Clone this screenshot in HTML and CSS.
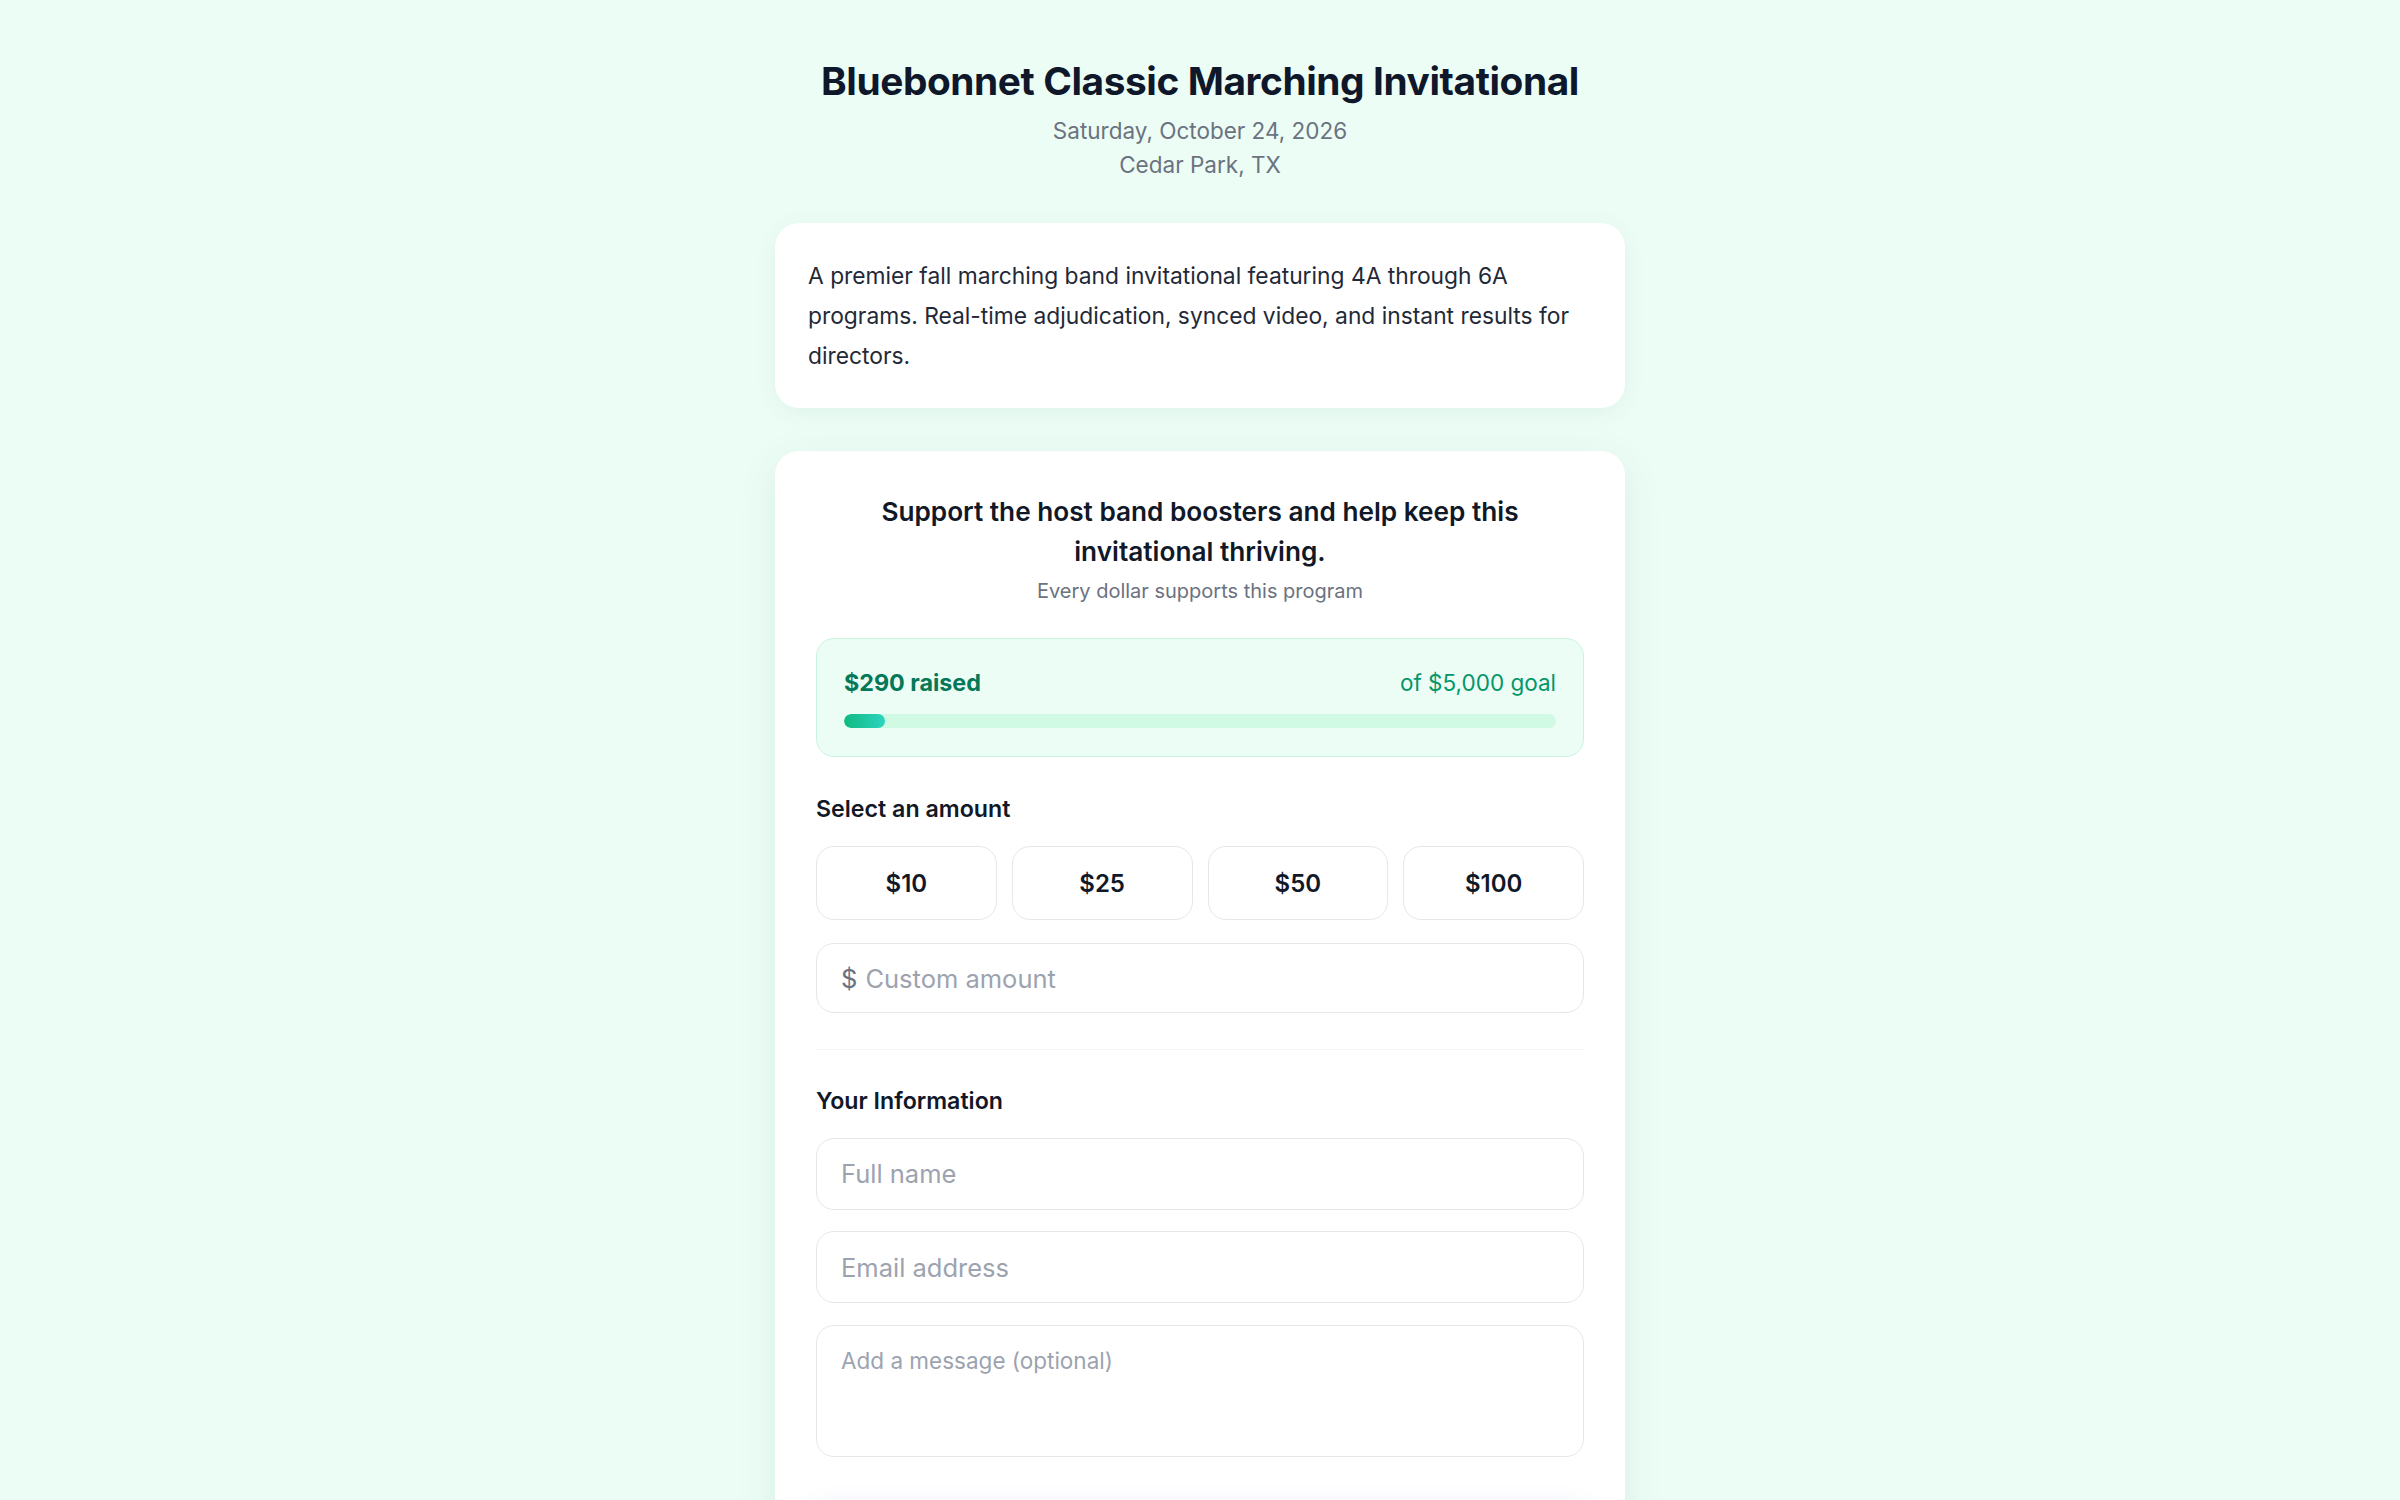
FILE: index.html
```html
<!DOCTYPE html>
<html lang="en">
<head>
<meta charset="UTF-8">
<title>Bluebonnet Classic Marching Invitational</title>
<meta name="viewport" content="width=device-width, initial-scale=1.0">
<link rel="stylesheet" href="styles.css">
</head>
<body>
<div class="page">
  <header class="event-head">
    <h1>Bluebonnet Classic Marching Invitational</h1>
    <p class="meta">Saturday, October 24, 2026</p>
    <p class="meta">Cedar Park, TX</p>
  </header>

  <div class="card about">
    <p>A premier fall marching band invitational featuring 4A through 6A programs. Real-time adjudication, synced video, and instant results for directors.</p>
  </div>

  <div class="card donate">
    <h2>Support the host band boosters and help keep this invitational thriving.</h2>
    <p class="sub">Every dollar supports this program</p>

    <div class="progress">
      <div class="progress-top">
        <span class="raised">$290 raised</span>
        <span class="goal">of $5,000 goal</span>
      </div>
      <div class="track">
        <div class="fill" style="width: 5.8%"></div>
      </div>
    </div>

    <h3 class="label">Select an amount</h3>
    <div class="amounts">
      <button class="amount">$10</button>
      <button class="amount">$25</button>
      <button class="amount">$50</button>
      <button class="amount">$100</button>
    </div>
    <div class="field custom">
      <span class="cur">$</span>
      <input type="text" placeholder="Custom amount">
    </div>

    <hr>

    <h3 class="label">Your Information</h3>
    <div class="field"><input type="text" placeholder="Full name"></div>
    <div class="field"><input type="email" placeholder="Email address"></div>
    <div class="field message"><textarea placeholder="Add a message (optional)"></textarea></div>

    <button class="submit">Donate</button>
  </div>
</div>
</body>
</html>
```

FILE: styles.css
```css
body, html {
  margin: 0;
  font-family: Inter, "Noto Sans", sans-serif;
  color: #111827;
  box-sizing: border-box;
}
body {
  background: #ecfdf5;
  min-height: 100vh;
}
*, *:before, *:after {
  box-sizing: inherit;
}

.page {
  width: 850px;
  margin: 0 auto;
  padding-top: 57px;
}

.event-head {
  text-align: center;
  margin-bottom: 41px;
}
.event-head h1 {
  margin: 0 0 10px;
  font-size: 38.8px;
  line-height: 47px;
  font-weight: 700;
  letter-spacing: -0.4px;
  color: #0f172a;
}
.meta {
  margin: 0;
  font-size: 22.5px;
  line-height: 34px;
  color: #6b7280;
}

.card {
  background: #fff;
  border-radius: 24px;
  box-shadow: 0 4px 24px rgba(16, 80, 60, 0.06);
}

.about {
  padding: 33px 33px 32px;
  margin-bottom: 42.5px;
}
.about p {
  margin: 0;
  font-size: 22.8px;
  line-height: 40px;
  color: #1f2937;
}

.donate {
  padding: 41.5px 41px 60px;
  box-shadow: 0 10px 40px rgba(16, 80, 60, 0.08);
}
.donate h2 {
  margin: 0;
  text-align: center;
  font-size: 26.2px;
  line-height: 40px;
  font-weight: 600;
  color: #111827;
  padding: 0 20px;
}
.sub {
  margin: 4.5px 0 33.5px;
  text-align: center;
  font-size: 20px;
  line-height: 28px;
  color: #6b7280;
}

.progress {
  background: #ecfdf5;
  border: 1.5px solid #c9f5df;
  border-radius: 18px;
  padding: 28.5px 27px;
}
.progress-top {
  display: flex;
  justify-content: space-between;
  font-size: 22.5px;
  line-height: 30px;
  margin-bottom: 16px;
}
.raised {
  font-size: 23.3px;
  font-weight: 700;
  color: #047857;
}
.goal {
  color: #059669;
}
.track {
  height: 14px;
  border-radius: 7px;
  background: #d1fae5;
  overflow: hidden;
}
.fill {
  height: 100%;
  border-radius: 7px;
  background: linear-gradient(90deg, #10b981, #2dd4bf);
}

.label {
  margin: 39px 0 24px;
  font-size: 23.2px;
  line-height: 26px;
  font-weight: 600;
  color: #111827;
}
hr + .label {
  margin-top: 38px;
}

.amounts {
  display: grid;
  grid-template-columns: repeat(4, 1fr);
  gap: 15px;
  margin-bottom: 23px;
}
.amount {
  height: 74px;
  background: #fff;
  border: 1.5px solid #e5e7eb;
  border-radius: 18px;
  font-family: inherit;
  font-size: 24px;
  font-weight: 600;
  color: #111827;
}

.field {
  display: flex;
  align-items: center;
  border: 1.5px solid #e5e7eb;
  border-radius: 18px;
  height: 72px;
  padding: 0 24px;
  margin-bottom: 21.5px;
}
.field input, .field textarea {
  border: 0;
  outline: none;
  width: 100%;
  font-family: inherit;
  font-size: 25.5px;
  color: #111827;
  background: transparent;
  padding: 0;
}
.field input::placeholder, .field textarea::placeholder {
  color: #9ca3af;
}
.custom {
  height: 70px;
  margin-bottom: 0;
}
.cur {
  font-size: 25.5px;
  color: #6b7280;
  margin-right: 8px;
}
.message {
  height: 132px;
  align-items: stretch;
  padding-top: 12px;
  padding-bottom: 12px;
}
.field textarea {
  font-size: 22.5px;
  height: 100%;
  resize: none;
  padding-top: 9px;
}

hr {
  border: 0;
  border-top: 1.5px solid #f1f3f5;
  margin: 35.5px 0 0;
}

.submit {
  display: block;
  width: 100%;
  height: 80px;
  margin-top: 48px;
  border: 0;
  border-radius: 18px;
  background: linear-gradient(90deg, #6366f1, #8b5cf6);
  color: #fff;
  font-family: inherit;
  font-size: 24px;
  font-weight: 600;
  box-shadow: 0 8px 28px rgba(99, 102, 241, 0.25);
}
```
